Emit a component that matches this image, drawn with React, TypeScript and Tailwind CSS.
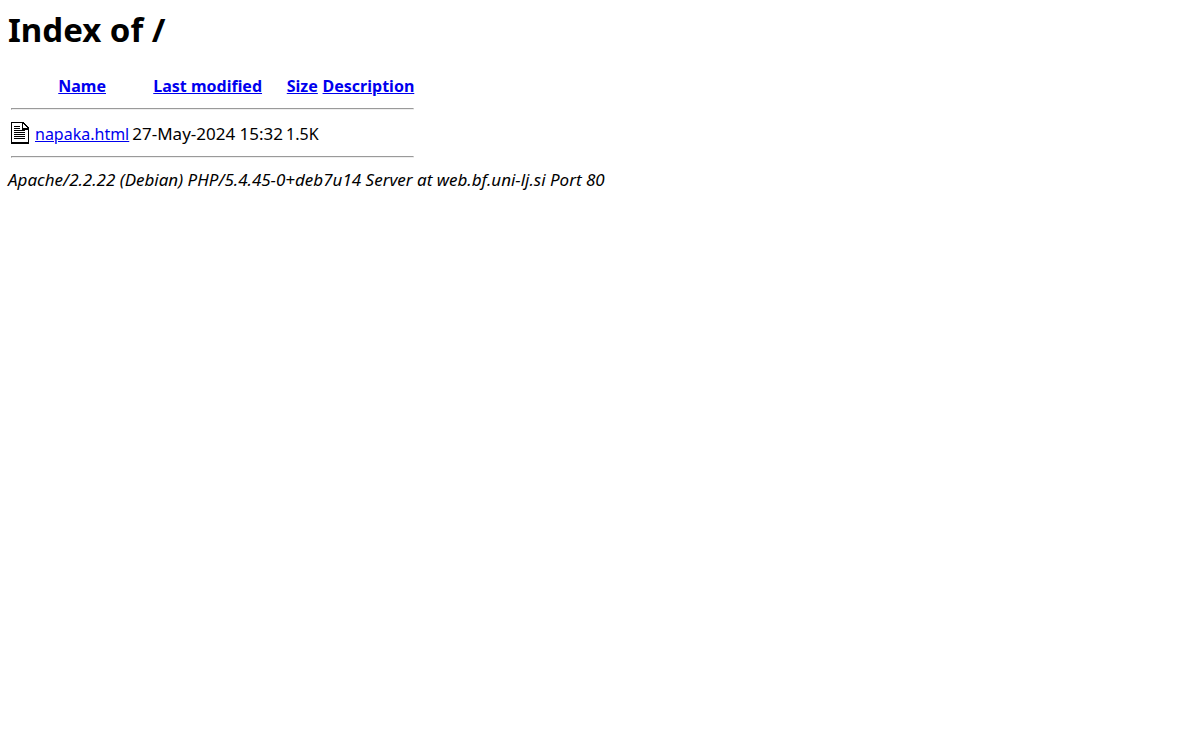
const entries = [
  { name: 'napaka.html', modified: '27-May-2024 15:32', size: '1.5K', description: '' },
];

const linkClass = 'text-[#0000ee] underline';

function TextIcon() {
  return (
    <svg width="20" height="22" viewBox="0 0 20 22" shapeRendering="crispEdges" role="img" aria-label="[TXT]" className="block">
      <path d="M0 0h12l6 6v16H0z" fill="#000" />
      <path d="M1 1h10v7h6v12H1z" fill="#fff" />
      <path d="M12 2l4 4h-4z" fill="#fff" />
      <path d="M3 4.5h6M3 6.5h6M3 8.5h11M3 10.5h11M3 12.5h11M3 14.5h11M3 16.5h11" stroke="#000" />
    </svg>
  );
}

function RuleRow() {
  return (
    <tr>
      <th colSpan={5} className="p-px">
        <hr className="my-2 h-0.5 border border-[#9a9a9a] border-b-[#eeeeee] border-r-[#eeeeee]" />
      </th>
    </tr>
  );
}

export default function App() {
  return (
    <main className="bg-white p-2 font-['Noto_Sans','Open_Sans',sans-serif] text-base leading-[21px] text-black">
      <h1 className="mb-5 text-[33px] leading-[43px] font-bold">Index of /</h1>
      <table className="border-separate border-spacing-[2px]">
        <thead>
          <tr>
            <th className="p-px" />
            <th className="px-px pt-[3px]"><a href="?C=N;O=D" className={linkClass}>Name</a></th>
            <th className="px-px pt-[3px]"><a href="?C=M;O=A" className={linkClass}>Last modified</a></th>
            <th className="px-px pt-[3px]"><a href="?C=S;O=A" className={linkClass}>Size</a></th>
            <th className="px-px pt-[3px]"><a href="?C=D;O=A" className={linkClass}>Description</a></th>
          </tr>
        </thead>
        <tbody>
          <RuleRow />
          {entries.map((entry) => (
            <tr key={entry.name}>
              <td className="p-px"><TextIcon /></td>
              <td className="px-px pt-[3px]"><a href={entry.name} className={linkClass}>{entry.name}</a></td>
              <td className="py-px text-right text-[17px]">{entry.modified}</td>
              <td className="px-px pt-[3px]">{entry.size}</td>
              <td className="px-px pt-[3px]">{entry.description}</td>
            </tr>
          ))}
          <RuleRow />
        </tbody>
      </table>
      <address className="text-[17px] italic">Apache/2.2.22 (Debian) PHP/5.4.45-0+deb7u14 Server at web.bf.uni-lj.si Port 80</address>
    </main>
  );
}
